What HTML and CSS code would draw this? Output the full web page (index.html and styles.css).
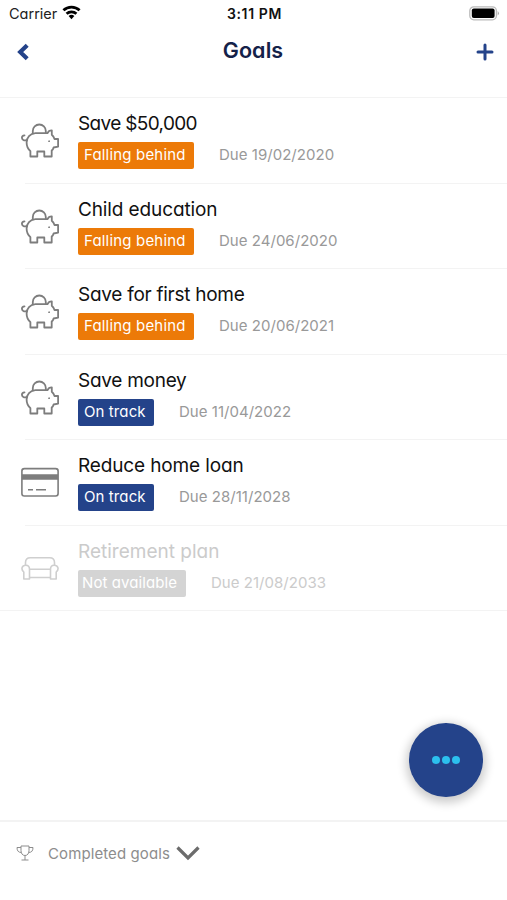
FILE: index.html
```
<!DOCTYPE html>
<html lang="en">
<head>
<meta charset="utf-8">
<title>Goals</title>
<link rel="stylesheet" href="styles.css">
</head>
<body>
<svg class="sprite" aria-hidden="true">
  <symbol id="pig" viewBox="0 0 38 36">
    <g fill="none" stroke="#7d7d7d" stroke-width="1.800" stroke-linejoin="round" stroke-linecap="round">
      <path d="M11.800 10.500V8a6.500 6.500 0 0 1 13 0v1.800"/>
      <path d="M26.500 10.200H14.500C9 10.500 5.600 14.500 5.600 19.500c0 3.800 1.400 6.500 3.800 8.700V33.500h6.900V28.500h7v5h7.400V27.500c1.100-.8 1.600-1.600 1.900-3l4.500-.8V16h-3.600c-.5-1.800-1.300-3-2.700-4.200V7.300c-2 0-3.600 1-4.300 2.900z"/>
      <path d="M5.400 17.200C3 17.800 1 16.800.9 14.800.9 13.200 2 12.400 3.500 12.300"/>
      <circle cx="28" cy="18.200" r=".4" fill="#7d7d7d" stroke-width="1"/>
    </g>
  </symbol>
</svg>
<header class="statusbar">
  <div class="carrier">
    <span>Carrier</span>
    <svg width="19" height="15" viewBox="0 0 20 15" fill="none" stroke="#000" stroke-width="2.900">
      <path d="M1.500 5.200a12.200 12.200 0 0 1 17 0M4.800 8.800a7.600 7.600 0 0 1 10.400 0"/>
      <path d="M10 14.500l-3-3.200a4.400 4.400 0 0 1 6 0z" fill="#000" stroke="none"/>
    </svg>
  </div>
  <div class="clock">3:11 PM</div>
  <svg class="battery" width="31" height="15" viewBox="0 0 31 15">
    <rect x=".8" y=".8" width="26.600" height="13" rx="4" fill="#fff" stroke="#bbb" stroke-width="1.300"/>
    <rect x="2.800" y="2.600" width="22.800" height="9.400" rx="2" fill="#000"/>
    <path d="M28.700 5q2.400 2.300 0 4.600z" fill="#aaa"/>
  </svg>
</header>
<nav class="navbar">
  <svg width="14" height="18" viewBox="0 0 14 18" fill="none" stroke="#24438a" stroke-width="4.200"><path d="M11.200 2.200L4.200 9l7 6.800"/></svg>
  <h1>Goals</h1>
  <svg width="18" height="18" viewBox="0 0 18 18" fill="none" stroke="#24438a" stroke-width="3" stroke-linecap="round"><path d="M9 2v14M2 9h14"/></svg>
</nav>
<main class="goals">
  <section class="goal">
    <svg class="icon"><use href="#pig"/></svg>
    <div class="info"><h2 class="t1">Save $50,000</h2>
      <div class="meta"><span class="badge late">Falling behind</span><span class="due">Due 19/02/2020</span></div></div>
  </section>
  <section class="goal">
    <svg class="icon"><use href="#pig"/></svg>
    <div class="info"><h2 class="t2">Child education</h2>
      <div class="meta"><span class="badge late">Falling behind</span><span class="due">Due 24/06/2020</span></div></div>
  </section>
  <section class="goal">
    <svg class="icon"><use href="#pig"/></svg>
    <div class="info"><h2 class="t3">Save for first home</h2>
      <div class="meta"><span class="badge late">Falling behind</span><span class="due">Due 20/06/2021</span></div></div>
  </section>
  <section class="goal">
    <svg class="icon"><use href="#pig"/></svg>
    <div class="info"><h2 class="t4">Save money</h2>
      <div class="meta"><span class="badge ok">On track</span><span class="due">Due 11/04/2022</span></div></div>
  </section>
  <section class="goal">
    <svg class="icon" viewBox="0 0 38 36" fill="none" stroke="#7d7d7d" stroke-width="1.600">
      <rect x=".9" y="3.600" width="36.200" height="27.400" rx="2.500"/>
      <path d="M1 12h36" stroke-width="5.500"/>
      <path d="M7 24.700h5M15 24.700h10"/>
    </svg>
    <div class="info"><h2 class="t5">Reduce home loan</h2>
      <div class="meta"><span class="badge ok">On track</span><span class="due">Due 28/11/2028</span></div></div>
  </section>
  <section class="goal off">
    <svg class="icon" viewBox="0 0 38 36" fill="none" stroke="#cfcfcf" stroke-width="1.600" stroke-linejoin="round">
      <path d="M4.500 14.500V11.500c0-3.200 1.700-4.800 4.800-4.800h19.400c3.100 0 4.800 1.600 4.800 4.800v3"/>
      <path d="M2.800 21C-.5 18 1 14.300 4.800 14.300c2.400 0 3.700 1.500 3.700 4V28H2.800zM35.200 21c3.300-3 1.800-6.700-2-6.700-2.400 0-3.700 1.500-3.700 4V28h5.700z"/>
      <path d="M8.500 18.300h21M8.500 26.500h21"/>
    </svg>
    <div class="info"><h2 class="t6">Retirement plan</h2>
      <div class="meta"><span class="badge na">Not available</span><span class="due">Due 21/08/2033</span></div></div>
  </section>
</main>
<button class="fab" aria-label="More"><i></i><i></i><i></i></button>
<footer class="completed">
  <svg width="18" height="16" viewBox="0 0 18 16" fill="none" stroke="#8d8d8d" stroke-width="1">
    <path d="M5 1h8v4.500c0 3-1.500 5-4 5s-4-2-4-5zM9 10.500V15M5.500 15h7M5 2.500H1c0 3.500 1.500 5 4.500 5M13 2.500h4c0 3.500-1.500 5-4.500 5"/>
  </svg>
  <span>Completed goals</span>
  <svg width="24" height="15" viewBox="0 0 24 15" fill="none" stroke="#6c6c6c" stroke-width="3.200"><path d="M1.500 1.500L12 12 22.500 1.500"/></svg>
</footer>
</body>
</html>
```
FILE: styles.css
```
* { box-sizing: border-box; }
body {
  margin: 0;
  height: 900px;
  display: flex;
  flex-direction: column;
  overflow: hidden;
  background: #fff;
  font-family: Inter, "Liberation Sans", sans-serif;
  font-feature-settings: "cv11";
}
h1, h2 { margin: 0; }
.sprite { position: absolute; width: 0; height: 0; }
.statusbar {
  height: 28px;
  padding: 0 7px 2px 9px;
  display: grid;
  grid-template-columns: 1fr auto 1fr;
  align-items: center;
  font-size: 14.5px;
  color: #222;
}
.carrier { display: flex; gap: 5px; align-items: center; }
.carrier svg { margin-top: -2px; }
.clock { font-weight: 600; font-size: 14px; letter-spacing: .6px; color: #111; }
.battery { justify-self: end; }
.navbar {
  height: 69px;
  padding: 0 13px 25px 16px;
  display: flex;
  align-items: center;
  justify-content: space-between;
}
.navbar svg { margin-top: 4px; }
.navbar h1 { font-size: 21.5px; font-weight: 600; line-height: 26px; letter-spacing: .1px; color: #142249; }
.goals { border-top: 1px solid #f3f3f3; border-bottom: 1px solid #f3f3f3; }
.goal { height: 85.5px; padding: 14.3px 0 0 21px; display: flex; gap: 19px; position: relative; }
.goal:last-child { height: 84.5px; }
.goal + .goal::before {
  content: "";
  position: absolute;
  top: -1px;
  left: 25px;
  right: 0;
  height: 1px;
  background: #f3f3f3;
}
.icon { width: 38px; height: 36px; margin-top: 11px; flex: none; }
.goal h2 { font-size: 19px; font-weight: 400; line-height: 24px; color: #111; white-space: nowrap; }
.goal .t1 { letter-spacing: -.65px; }
.goal .t2 { letter-spacing: -.12px; }
.goal .t3 { letter-spacing: -.27px; }
.goal .t4 { letter-spacing: -.27px; }
.goal .t5 { letter-spacing: -.14px; }
.meta { display: flex; gap: 25px; margin-top: 6px; line-height: 27px; font-size: 15px; }
.badge { height: 27px; border-radius: 2px; padding-left: 6px; color: #fff; line-height: 26px; white-space: nowrap; }
.late { width: 116px; background: #ec7a08; letter-spacing: .18px; }
.ok { width: 76px; background: #24438a; letter-spacing: .1px; }
.na { width: 108px; background: #d4d4d4; padding-left: 4px; line-height: 25px; letter-spacing: .08px; }
.due { color: #999; line-height: 25px; letter-spacing: .03px; white-space: nowrap; }
.off h2, .off .due { color: #cbcbcb; }
.fab {
  position: absolute;
  left: 409px;
  top: 723px;
  width: 73.5px;
  height: 73.5px;
  padding: 0;
  border: 0;
  border-radius: 50%;
  background: #24438a;
  box-shadow: 0 3px 10px 3px rgba(0, 0, 0, .2);
  display: flex;
  align-items: center;
  justify-content: center;
  gap: 2px;
}
.fab i { width: 8px; height: 8px; border-radius: 50%; background: #2cc0ee; }
.completed {
  margin-top: auto;
  height: 80px;
  padding: 0 0 16px 16px;
  border-top: 2px solid #f3f3f3;
  display: flex;
  align-items: center;
  font-size: 15px;
  letter-spacing: .1px;
  color: #8d8d8d;
}
.completed span { width: 128px; margin-left: 14px; white-space: nowrap; }
```
